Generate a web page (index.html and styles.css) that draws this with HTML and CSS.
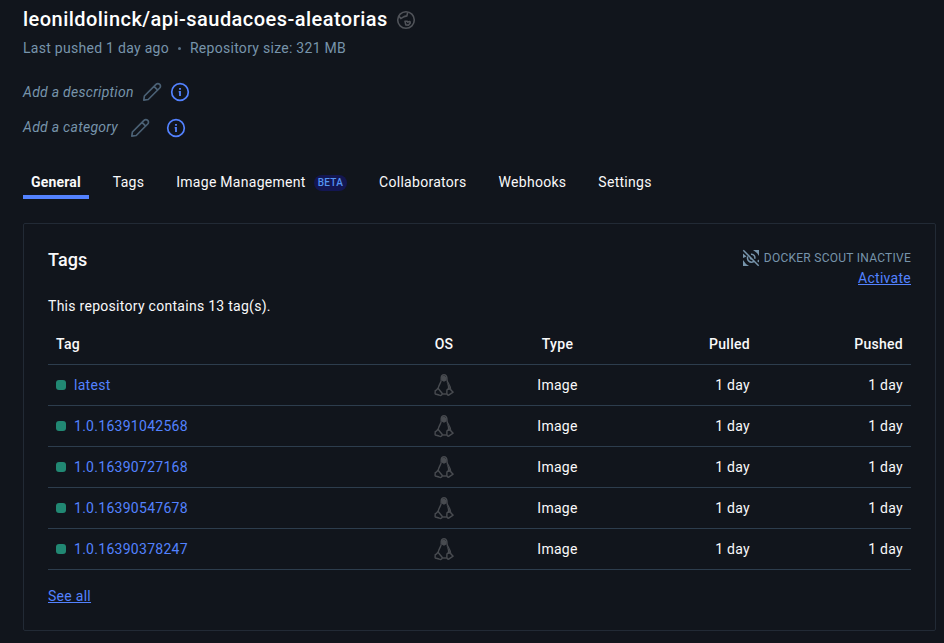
FILE: index.html
```html
<!DOCTYPE html>
<html lang="en">
<head>
<meta charset="utf-8">
<title>leonildolinck/api-saudacoes-aleatorias</title>
<link rel="stylesheet" href="styles.css">
</head>
<body>
<svg class="defs" aria-hidden="true">
  <symbol id="pencil" viewBox="0 0 20 20">
    <path d="M1.800 18.200 2.400 14 14 2.300a2.500 2.500 0 0 1 3.700 3.700L6.200 17.500Z M12 4.400l3.700 3.700" fill="none" stroke="currentColor" stroke-width="1.700" stroke-linejoin="round"/>
  </symbol>
  <symbol id="info" viewBox="0 0 20 20">
    <circle cx="10" cy="10" r="8.300" fill="none" stroke="currentColor" stroke-width="1.700"/>
    <path d="M9.100 6h1.800v1.700H9.100zM8.700 9h2.200v5H9.100v-3.600h-.4z" fill="currentColor"/>
  </symbol>
  <symbol id="linux" viewBox="0 0 20 24">
    <g fill="none" stroke="currentColor" stroke-width="1.400" stroke-linejoin="round">
      <path d="M7.200 7.500C7 3.500 7.400 1.800 10 1.800s3.100 2 3 5.100c0 2.300 3.600 5.300 3.600 9.500"/>
      <path d="M7.200 7.500C6.800 10 4.300 12.500 4.200 15.600"/>
      <path d="M4 15.200 8.300 20.500c-.5 2.300-1.800 2.300-3.300 1.500l-3.700-1c-.7-.8.2-2-.1-3.400 1.500-.2 1.800-1.200 2.800-2.400Z"/>
      <path d="M13 16.800c.8-1.200 3.300-1.500 3.700-.3.300 1.500 2 1.600 2.400 2.700l-4.400 3c-2.300 0-2-2.300-1.700-5.400Z"/>
      <path d="M8.300 21h4.500"/>
    </g>
    <path d="M7.500 3.500 10 2.500l2.700 1.800-.4 3.200-2.300 1.300-2.500-1.300ZM12.500 8.500l2.900 4.500.8 3.500-2.200.5-.2-4Z" fill="currentColor"/>
  </symbol>
</svg>
<main class="page">
  <header class="repo">
    <div class="repo-title">
      <h1>leonildolinck/api-saudacoes-aleatorias</h1>
      <svg class="globe" viewBox="0 0 20 20" fill="none" stroke="currentColor" stroke-width="1.600" stroke-linejoin="round"><circle cx="10" cy="10" r="8.300"/><path d="M2.900 6 4.800 8.600l3.200-2 2.900-.7.800-3.500M9 11.300h2.200l.7.8 2-.6.4 1.600-1.700 2-2.800-.2Z"/></svg>
    </div>
    <p class="meta"><span>Last pushed 1 day ago</span><i class="sep"></i><span>Repository size: 321 MB</span></p>
    <div class="field description"><em>Add a description</em><svg class="icon pencil"><use href="#pencil"/></svg><svg class="icon info"><use href="#info"/></svg></div>
    <div class="field category"><em>Add a category</em><svg class="icon pencil"><use href="#pencil"/></svg><svg class="icon info"><use href="#info"/></svg></div>
  </header>
  <nav class="tabs">
    <a class="tab active">General</a>
    <a class="tab">Tags</a>
    <a class="tab">Image Management<span class="beta">BETA</span></a>
    <a class="tab">Collaborators</a>
    <a class="tab">Webhooks</a>
    <a class="tab">Settings</a>
  </nav>
  <section class="card">
    <div class="card-head">
      <h2>Tags</h2>
      <div class="scout">
        <div class="scout-status"><svg class="scout-icon" viewBox="0 0 18 18"><path d="M11 1h6v6l-2-3ZM1 4.500l3.500 3L1 9ZM1 11v6h6l-3-2ZM17 10.500v3l-2-1.500Z" fill="currentColor"/><path d="m1.300 1.300 15.400 15.400M5.800 7.500c-1.300 3.800 2.200 7 6 5M9 5.300c2.700-.3 4.400 2 3.700 4.400M8.300 8.600c0 1 .6 1.600 1.600 1.500" fill="none" stroke="currentColor" stroke-width="1.500"/></svg>DOCKER SCOUT INACTIVE</div>
        <a class="link">Activate</a>
      </div>
    </div>
    <p class="summary">This repository contains 13 tag(s).</p>
    <table>
      <thead><tr><th class="c-tag">Tag</th><th class="c-os">OS</th><th class="c-type">Type</th><th class="c-pulled">Pulled</th><th class="c-pushed">Pushed</th></tr></thead>
      <tbody>
        <tr><td><a class="tag">latest</a></td><td class="c-os"><svg class="linux"><use href="#linux"/></svg></td><td class="c-type">Image</td><td class="c-pulled">1 day</td><td class="c-pushed">1 day</td></tr>
        <tr><td><a class="tag">1.0.16391042568</a></td><td class="c-os"><svg class="linux"><use href="#linux"/></svg></td><td class="c-type">Image</td><td class="c-pulled">1 day</td><td class="c-pushed">1 day</td></tr>
        <tr><td><a class="tag">1.0.16390727168</a></td><td class="c-os"><svg class="linux"><use href="#linux"/></svg></td><td class="c-type">Image</td><td class="c-pulled">1 day</td><td class="c-pushed">1 day</td></tr>
        <tr><td><a class="tag">1.0.16390547678</a></td><td class="c-os"><svg class="linux"><use href="#linux"/></svg></td><td class="c-type">Image</td><td class="c-pulled">1 day</td><td class="c-pushed">1 day</td></tr>
        <tr><td><a class="tag">1.0.16390378247</a></td><td class="c-os"><svg class="linux"><use href="#linux"/></svg></td><td class="c-type">Image</td><td class="c-pulled">1 day</td><td class="c-pushed">1 day</td></tr>
      </tbody>
    </table>
    <a class="link see-all">See all</a>
  </section>
</main>
</body>
</html>
```
FILE: styles.css
```css
* { box-sizing: border-box; }
body {
  margin: 0;
  height: 643px;
  overflow: hidden;
  background: #11151c;
  color: #f9f9fa;
  font: 14px/20px Roboto, sans-serif;
  letter-spacing: 0.28px;
}
h1, h2, p { margin: 0; }
svg { display: block; flex: none; }
.defs { position: absolute; width: 0; height: 0; }
.page { padding: 4px 8px 0 23px; }

.repo { color: #7794ab; }
.repo-title { display: flex; align-items: center; gap: 8px; height: 30px; }
h1 { color: #fff; font-size: 20px; font-weight: 500; line-height: 30px; letter-spacing: 0.46px; }
.globe { width: 20px; height: 20px; margin-top: 2px; color: #505359; }
.meta { display: flex; align-items: center; height: 20px; margin-top: 4px; }
.sep { width: 3px; height: 3px; margin: 0 9px; border-radius: 50%; background: #58728a; }
.field { display: flex; align-items: center; height: 20px; }
.description { margin-top: 24px; }
.category { margin-top: 16px; }
.category em { margin-top: -2px; }
.icon { width: 20px; height: 20px; }
.pencil { margin-left: 8.5px; color: #4b6175; }
.info { margin-left: 8px; color: #5382ff; }
.category .pencil { margin-left: 12px; }
.category .info { margin-left: 16px; }

.tabs { display: flex; gap: 16px; margin-top: 27px; }
.tab { display: flex; align-items: center; height: 34px; padding: 4px 8px 0; border-bottom: 4px solid transparent; }
.tab.active { border-color: #5382ff; font-weight: 700; letter-spacing: 0.17px; }
.beta { height: 16px; margin: 1px 0 0 8px; padding: 0 4px; border-radius: 8px; background: #131651; color: #5594f1; font-size: 10px; font-weight: 500; line-height: 16px; }

.card { height: 408px; margin-top: 24px; padding: 24px; border: 1px solid #222a35; border-radius: 2px; }
.card-head { display: flex; justify-content: space-between; height: 48px; }
h2 { font-size: 18px; font-weight: 500; line-height: 24px; letter-spacing: 0.1px; }
.scout { text-align: right; }
.scout-status { display: flex; align-items: center; gap: 4px; height: 20px; color: #7794ab; font-size: 12px; letter-spacing: 0.26px; }
.scout-icon { width: 18px; height: 18px; }
.link { color: #5382ff; text-decoration: underline; }
.summary { margin-bottom: 8px; }

table { width: 863px; border-collapse: separate; border-spacing: 0; table-layout: fixed; }
th, td { height: 41px; padding: 0 8px; border-bottom: 1px solid #2d3d4d; text-align: left; }
th { font-weight: 500; }
.c-tag { width: 373px; }
.c-os { width: 46px; text-align: center; }
.c-type { width: 181px; text-align: center; }
.c-pulled { width: 110px; text-align: right; }
.c-pushed { width: 153px; text-align: right; }
.tag { display: flex; align-items: center; gap: 8px; color: #5382ff; }
.tag::before { width: 10px; height: 10px; border-radius: 3px; background: #218873; content: ""; }
.linux { width: 20px; height: 24px; margin: 0 auto; color: #484b50; }
.see-all { display: inline-block; margin-top: 16px; }
```
